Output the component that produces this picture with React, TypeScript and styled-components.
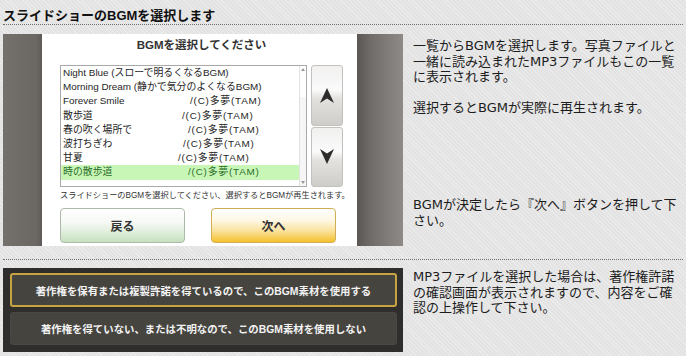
import React from "react";
import styled, { createGlobalStyle } from "styled-components";

const GOTHIC = `"Liberation Sans", "Noto Sans CJK JP", sans-serif`;
const MEIRYO = `"DejaVu Sans", "Noto Sans CJK JP", sans-serif`;

const GlobalStyle = createGlobalStyle`
  html, body { margin: 0; padding: 0; }
  body {
    width: 686px;
    height: 356px;
    overflow: hidden;
    background-color: #e3e3e3;
    background-image: repeating-linear-gradient(45deg, rgba(255,255,255,0.28) 0 1px, rgba(0,0,0,0) 1px 3px);
    font-family: ${MEIRYO};
  }
`;

const Page = styled.div`
  padding: 0 3px;
`;

const Heading = styled.h2`
  margin: 0;
  padding-top: 7px;
  height: 17px;
  line-height: 17px;
  font-family: ${GOTHIC};
  font-size: 13px;
  font-weight: bold;
  color: #111;
  border-bottom: 1px dotted #6f6f6f;
  white-space: nowrap;
`;

const Section = styled.div<{ $pt: number; $pb: number; $divider?: boolean }>`
  display: flex;
  gap: 10px;
  padding-top: ${(p) => p.$pt}px;
  padding-bottom: ${(p) => p.$pb}px;
  border-bottom: ${(p) => (p.$divider ? "1px dotted #6f6f6f" : "none")};
`;

/* ---------- device screenshot ---------- */
const Figure = styled.div`
  flex: none;
  width: 400px;
  height: 212px;
  display: flex;
`;

const LeftBand = styled.div`
  width: 39px;
  background: linear-gradient(to right, #74716d, #6b6864 85%, #5e5b58);
`;

const RightBand = styled.div`
  width: 46px;
  background: linear-gradient(to right, #5a5754 0%, #6f6c69 30%, #8d8a87 100%);
`;

const Panel = styled.div`
  width: 315px;
  box-sizing: border-box;
  background: #fff;
  padding: 3px 14px 0 18px;
  display: flex;
  flex-direction: column;
  font-family: ${GOTHIC};
`;

const DialogTitle = styled.div`
  text-align: center;
  font-size: 11.5px;
  font-weight: bold;
  line-height: 16px;
  color: #333;
  margin-bottom: 12px;
`;

const ListArea = styled.div`
  display: flex;
  gap: 4px;
  height: 122px;
`;

const ListBox = styled.div`
  width: 247px;
  box-sizing: border-box;
  border: 1px solid #a9a9a9;
  display: flex;
`;

const Items = styled.div`
  flex: 1;
  display: flex;
  flex-direction: column;
`;

const Item = styled.div<{ $active?: boolean }>`
  height: 14.2px;
  line-height: 14.2px;
  padding-left: 2px;
  display: flex;
  font-size: 9.9px;
  white-space: nowrap;
  color: ${(p) => (p.$active ? "#2a6f2a" : "#1e1e1e")};
  background: ${(p) => (p.$active ? "#c8f6b6" : "transparent")};
`;

const ItemTitle = styled.span<{ $w?: number }>`
  flex: none;
  width: ${(p) => (p.$w ? `${p.$w}px` : "auto")};
`;

const ItemCredit = styled.span`
  letter-spacing: 0.8px;
`;

const Scrollbar = styled.div`
  width: 6px;
  border-left: 1px solid #e2e2e2;
  display: flex;
  flex-direction: column;
  justify-content: space-between;
  align-items: center;
  padding: 2px 0;
  background: linear-gradient(to bottom, #fff 0 26%, #f6f6f6 26% 100%);
`;

const ArrowCol = styled.div`
  width: 32px;
  display: flex;
  flex-direction: column;
  gap: 1px;
`;

const ArrowButton = styled.div`
  flex: 1;
  border: 1px solid #c3c1be;
  border-radius: 3px;
  background: linear-gradient(to bottom, #f1f0ef 0%, #fbfbfb 40%, #e4e2df 55%, #cfcdca 100%);
  display: flex;
  align-items: center;
  justify-content: center;
`;

const Caption = styled.div`
  margin-top: 3px;
  font-size: 8.2px;
  line-height: 12px;
  color: #333;
  white-space: nowrap;
`;

const ButtonRow = styled.div`
  margin-top: 6px;
  display: flex;
  gap: 26px;
`;

const DialogButton = styled.div<{ $variant: "back" | "next" }>`
  width: 125px;
  height: 35px;
  box-sizing: border-box;
  border-radius: 4px;
  border: 1px solid ${(p) => (p.$variant === "next" ? "#cfae55" : "#aebaa9")};
  background: ${(p) =>
    p.$variant === "next"
      ? "linear-gradient(to bottom, #ffffff 0%, #fef7e3 35%, #fbe3a0 65%, #f5c12e 100%)"
      : "linear-gradient(to bottom, #ffffff 0%, #f6f9f5 40%, #e0eedc 70%, #c6e1bf 100%)"};
  display: flex;
  align-items: center;
  justify-content: center;
  font-size: 12px;
  font-weight: bold;
  color: #333;
`;

/* ---------- lower dark panel ---------- */
const DarkPanel = styled.div`
  flex: none;
  width: 400px;
  height: 84px;
  box-sizing: border-box;
  background: #302e2c;
  padding: 5px 6px 0 7px;
  display: flex;
  flex-direction: column;
  gap: 5px;
`;

const ChoiceButton = styled.div<{ $selected?: boolean }>`
  height: ${(p) => (p.$selected ? 34 : 33)}px;
  box-sizing: border-box;
  border-radius: 3px;
  border: ${(p) => (p.$selected ? "2px solid #c8a341" : "1px solid #4a4845")};
  background: #46443f;
  color: #f3f3f3;
  font-family: ${GOTHIC};
  font-size: 10.4px;
  font-weight: bold;
  display: flex;
  align-items: center;
  justify-content: center;
  white-space: nowrap;
`;

/* ---------- notes ---------- */
const Notes = styled.div<{ $pt: number }>`
  width: 270px;
  padding-top: ${(p) => p.$pt}px;
  font-size: 13px;
  line-height: 15.5px;
  color: #1c1c1c;
  white-space: nowrap;
`;

const Para = styled.p<{ $mt?: number }>`
  margin: ${(p) => p.$mt ?? 0}px 0 0 0;
`;

const Chevron = ({ down }: { down?: boolean }) => (
  <svg width="14" height="15" viewBox="0 0 14 15" style={down ? { transform: "rotate(180deg)" } : undefined}>
    <path d="M7 0 L14 15 L7 10.5 L0 15 Z" fill="#2c2c2c" />
  </svg>
);

const TinyTri = ({ down }: { down?: boolean }) => (
  <svg width="4" height="3" viewBox="0 0 4 3">
    <path d={down ? "M0 0 L4 0 L2 3 Z" : "M2 0 L4 3 L0 3 Z"} fill="#9a9a9a" />
  </svg>
);

const tracks: { title: string; w?: number; credit?: string; active?: boolean }[] = [
  { title: "Night Blue (スローで明るくなるBGM)" },
  { title: "Morning Dream (静かで気分のよくなるBGM)" },
  { title: "Forever Smile", w: 127, credit: "/(C)多夢(TAM)" },
  { title: "散歩道", w: 119, credit: "/(C)多夢(TAM)" },
  { title: "春の吹く場所で", w: 125, credit: "/(C)多夢(TAM)" },
  { title: "波打ちぎわ", w: 120, credit: "/(C)多夢(TAM)" },
  { title: "甘夏", w: 115, credit: "/(C)多夢(TAM)" },
  { title: "時の散歩道", w: 125, credit: "/(C)多夢(TAM)", active: true },
];

export default function App() {
  return (
    <>
      <GlobalStyle />
      <Page>
        <Heading>スライドショーのBGMを選択します</Heading>
        <Section $pt={9} $pb={13} $divider>
          <Figure>
            <LeftBand />
            <Panel>
              <DialogTitle>BGMを選択してください</DialogTitle>
              <ListArea>
                <ListBox>
                  <Items>
                    {tracks.map((t) => (
                      <Item key={t.title} $active={t.active}>
                        <ItemTitle $w={t.w}>{t.title}</ItemTitle>
                        {t.credit && <ItemCredit>{t.credit}</ItemCredit>}
                      </Item>
                    ))}
                  </Items>
                  <Scrollbar>
                    <TinyTri />
                    <TinyTri down />
                  </Scrollbar>
                </ListBox>
                <ArrowCol>
                  <ArrowButton>
                    <Chevron />
                  </ArrowButton>
                  <ArrowButton>
                    <Chevron down />
                  </ArrowButton>
                </ArrowCol>
              </ListArea>
              <Caption>スライドショーのBGMを選択してください、選択するとBGMが再生されます。</Caption>
              <ButtonRow>
                <DialogButton $variant="back">戻る</DialogButton>
                <DialogButton $variant="next">次へ</DialogButton>
              </ButtonRow>
            </Panel>
            <RightBand />
          </Figure>
          <Notes $pt={4}>
            <Para>
              一覧からBGMを選択します。写真ファイルと
              <br />
              一緒に読み込まれたMP3ファイルもこの一覧
              <br />
              に表示されます。
            </Para>
            <Para $mt={15.5}>選択するとBGMが実際に再生されます。</Para>
            <Para $mt={81.5}>
              BGMが決定したら『次へ』ボタンを押して下
              <br />
              さい。
            </Para>
          </Notes>
        </Section>
        <Section $pt={8} $pb={0}>
          <DarkPanel>
            <ChoiceButton $selected>著作権を保有または複製許諾を得ているので、このBGM素材を使用する</ChoiceButton>
            <ChoiceButton>著作権を得ていない、または不明なので、このBGM素材を使用しない</ChoiceButton>
          </DarkPanel>
          <Notes $pt={1}>
            <Para>
              MP3ファイルを選択した場合は、著作権許諾
              <br />
              の確認画面が表示されますので、内容をご確
              <br />
              認の上操作して下さい。
            </Para>
          </Notes>
        </Section>
      </Page>
    </>
  );
}
